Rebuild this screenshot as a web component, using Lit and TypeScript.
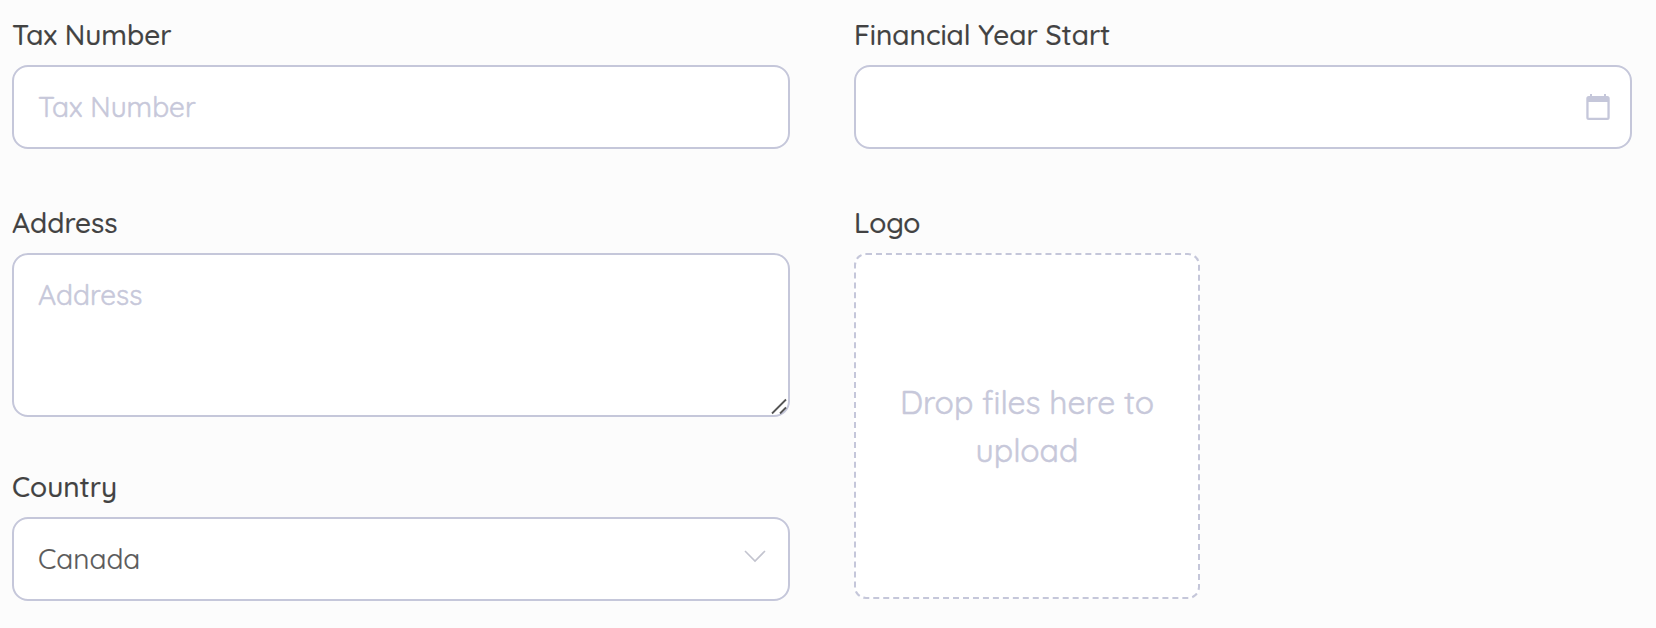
import { LitElement, html, css } from "lit";
import { customElement } from "lit/decorators.js";

@customElement("app-root")
export class AppRoot extends LitElement {
  static styles = css`
    :host {
      display: block;
      box-sizing: border-box;
      height: 628px;
      padding: 15px 24px 0 12px;
      background: #fcfcfc;
      color: #424242;
      font-family: Quicksand, Lato, sans-serif;
      font-size: 28px;
      font-weight: 400;
      -webkit-text-stroke: 0.2px currentColor;
      overflow: hidden;
    }
    .form {
      display: grid;
      grid-template-columns: 778px 778px;
      column-gap: 64px;
      grid-template-rows: 134px auto;
      row-gap: 54px;
    }
    .stack {
      display: flex;
      flex-direction: column;
      gap: 50px;
    }
    .field {
      display: flex;
      flex-direction: column;
    }
    .label {
      height: 50px;
      line-height: 40px;
      font-weight: 500;
      white-space: nowrap;
    }
    .box {
      box-sizing: border-box;
      display: flex;
      align-items: center;
      justify-content: space-between;
      height: 84px;
      padding: 0 20px 0 24px;
      border: 2px solid #c5c7da;
      border-radius: 16px;
      background: #fff;
      line-height: 40px;
    }
    .area {
      position: relative;
      height: 164px;
      padding-top: 20px;
      align-items: flex-start;
    }
    .hint {
      color: #c7c8da;
      -webkit-text-stroke-width: 0.5px;
    }
    .value { color: #5a5a5a; }
    .grip { position: absolute; right: 0; bottom: 0; }
    .drop {
      box-sizing: border-box;
      width: 346px;
      height: 346px;
      display: flex;
      flex-direction: column;
      justify-content: center;
      align-items: center;
      border: 2px dashed #c5c7da;
      border-radius: 12px;
      background: #fff;
      color: #c7c8da;
      font-size: 32px;
      line-height: 48px;
      -webkit-text-stroke-width: 0.5px;
    }
    svg { display: block; }
  `;

  render() {
    return html`
      <div class="form">
        <div class="field">
          <div class="label">Tax Number</div>
          <div class="box"><span class="hint">Tax Number</span></div>
        </div>
        <div class="field">
          <div class="label">Financial Year Start</div>
          <div class="box">
            <span></span>
            <svg width="24" height="26" viewBox="0 0 24 26">
              <path fill="#c5c7da" fill-rule="evenodd" d="M4 0h2v2h12V0h2v2h1.200A2.500 2.500 0 0 1 23.700 4.500V23.500A2.500 2.500 0 0 1 21.200 26h-18.400A2.500 2.500 0 0 1 .3 23.500v-19A2.500 2.500 0 0 1 2.800 2H4zM2.600 8v15.700h18.800V8z"/>
            </svg>
          </div>
        </div>
        <div class="stack">
          <div class="field">
            <div class="label">Address</div>
            <div class="box area">
              <span class="hint">Address</span>
              <svg class="grip" width="18" height="18" viewBox="0 0 18 18" fill="none" stroke="#555" stroke-width="1.8">
                <path d="M2 16.500 16 2.500M10 16.500l6-6"/>
              </svg>
            </div>
          </div>
          <div class="field">
            <div class="label">Country</div>
            <div class="box">
              <span class="value">Canada</span>
              <svg width="24" height="18" viewBox="0 0 24 18" fill="none" stroke="#c3c4cf" stroke-width="1.6">
                <path d="M1 1l10 10L21 1"/>
              </svg>
            </div>
          </div>
        </div>
        <div class="field">
          <div class="label">Logo</div>
          <div class="drop"><span>Drop files here to</span><span>upload</span></div>
        </div>
      </div>
    `;
  }
}
